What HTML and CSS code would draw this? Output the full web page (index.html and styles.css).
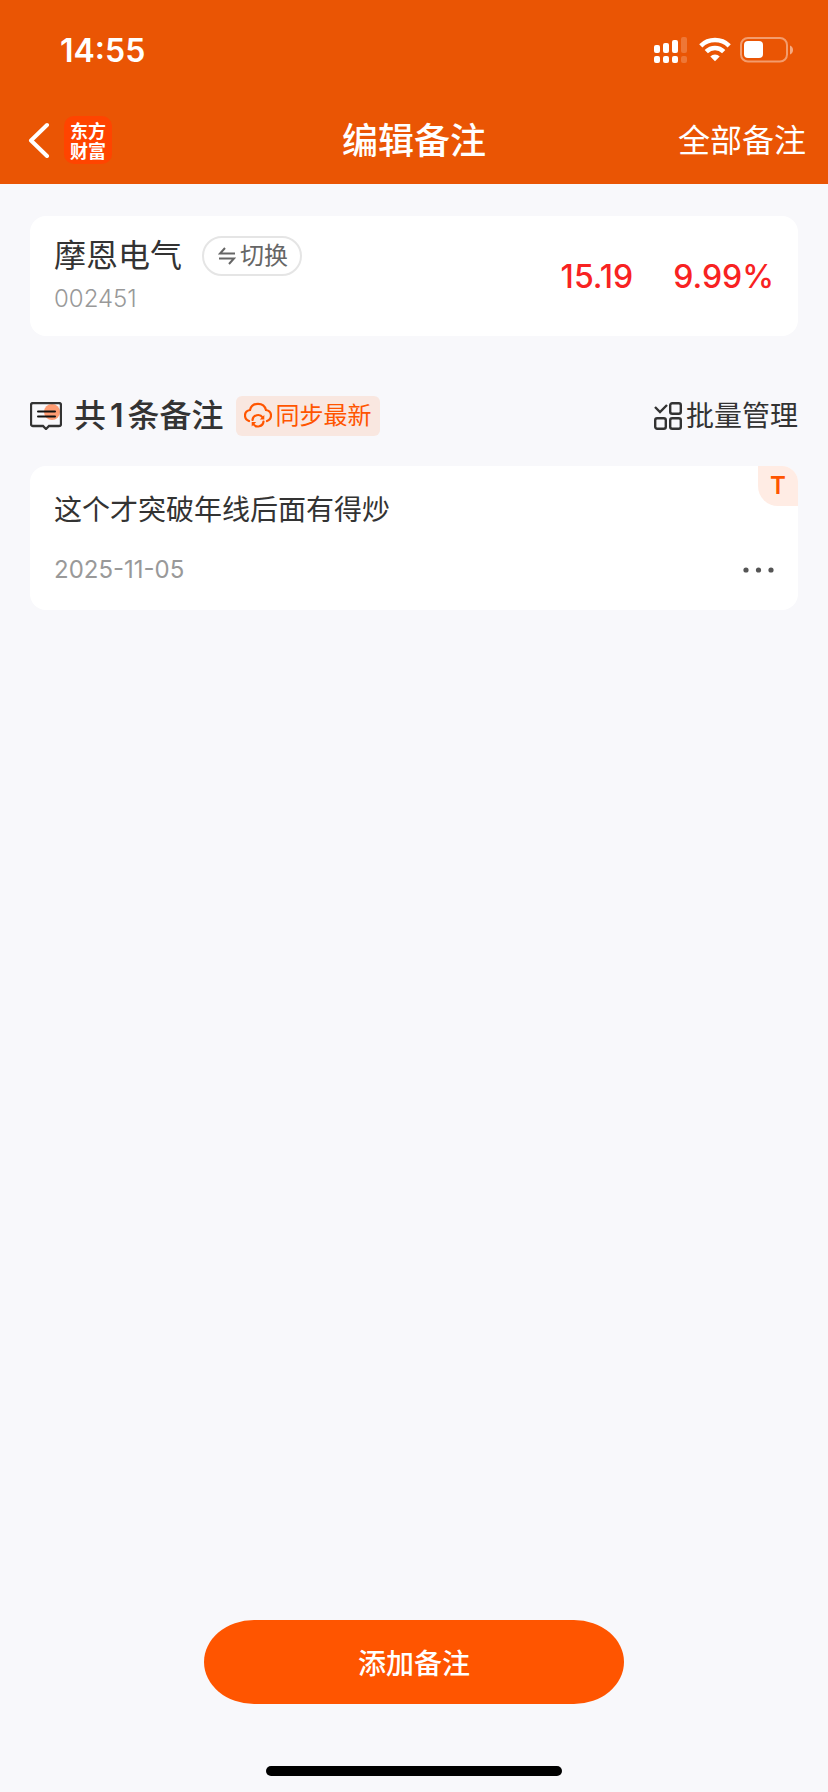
FILE: index.html
```html
<!DOCTYPE html>
<html lang="zh-CN">
<head>
<meta charset="utf-8">
<meta name="viewport" content="width=device-width, initial-scale=1">
<title>编辑备注</title>
<link rel="stylesheet" href="styles.css">
</head>
<body>
<div class="app">
  <header class="header">
    <div class="status">
      <time class="status-time">14:55</time>
      <div class="status-icons">
        <svg class="signal" width="34" height="26" viewBox="0 0 34 26" fill="#fff" aria-hidden="true">
          <rect x="0" y="8" width="6" height="8" rx="2"/><rect x="9" y="6" width="6" height="10" rx="2"/><rect x="18" y="3" width="6" height="13" rx="2"/><rect x="27" y="0" width="6" height="16" rx="2" opacity=".2"/>
          <rect x="0" y="19" width="6" height="7" rx="2"/><rect x="9" y="19" width="6" height="7" rx="2"/><rect x="18" y="19" width="6" height="7" rx="2"/><rect x="27" y="19" width="6" height="7" rx="2" opacity=".2"/>
        </svg>
        <svg class="wifi" width="32" height="26" viewBox="0 0 32 26" aria-hidden="true">
          <g fill="none" stroke="#fff" stroke-width="4.6"><path d="M1.8 8.8a20.4 20.4 0 0 1 28.4 0"/><path d="M7.3 14.6a12.3 12.3 0 0 1 17.4 0"/></g>
          <path d="M11.3 19.4a6.8 6.8 0 0 1 9.4 0L16 24.2z" fill="#fff"/>
        </svg>
        <svg class="battery" width="54" height="26" viewBox="0 0 54 26" aria-hidden="true">
          <rect x="1" y="1" width="46" height="23.600" rx="7" fill="none" stroke="#fff" stroke-width="2" opacity=".42"/>
          <rect x="4" y="4" width="19" height="17" rx="4" fill="#fff"/>
          <path d="M50 8.500c4 1.500 4 7.500 0 9z" fill="#fff" opacity=".5"/>
        </svg>
      </div>
    </div>
    <nav class="nav">
      <div class="nav-left">
        <button class="back" type="button" aria-label="返回">
          <svg width="22" height="36" viewBox="0 0 22 36" fill="none" stroke="#fff" stroke-width="4" stroke-linecap="round" stroke-linejoin="round" aria-hidden="true"><path d="M19 3L3 18.500L19 34"/></svg>
        </button>
        <div class="logo">东方<br>财富</div>
      </div>
      <h1 class="title">编辑备注</h1>
      <a class="all" href="#all">全部备注</a>
    </nav>
  </header>

  <main class="main">
    <section class="card stock">
      <div>
        <div class="stock-row">
          <h2 class="stock-name">摩恩电气</h2>
          <button class="switch" type="button">
            <svg width="18" height="20" viewBox="0 0 18 20" fill="none" stroke="#666" stroke-width="2" aria-hidden="true"><path d="M17 7.500H2L7 2M1 12.500h15L11 18"/></svg>切换
          </button>
        </div>
        <div class="stock-code">002451</div>
      </div>
      <div class="quote"><span>15.19</span><span>9.99%</span></div>
    </section>

    <div class="toolbar">
      <svg class="note-icon" width="32" height="28" viewBox="0 0 32 28" fill="none" aria-hidden="true">
        <circle cx="22" cy="10" r="8" fill="#ff9c73"/>
        <path d="M3 1h26a2 2 0 0 1 2 2v19a2 2 0 0 1-2 2H19l-3 3l-3-3H3a2 2 0 0 1-2-2V3a2 2 0 0 1 2-2z" stroke="#333" stroke-width="2.300"/>
        <path d="M8 9.500h17M8 14.500h17" stroke="#111" stroke-width="2" stroke-linecap="round"/>
      </svg>
      <h2 class="count">共<span class="num">1</span>条备注</h2>
      <button class="sync" type="button">
        <svg width="28" height="28" viewBox="0 0 28 28" fill="none" stroke="#f50" stroke-width="2.200" stroke-linecap="round" aria-hidden="true">
          <path d="M5 19C2.300 18 1 16 1 13.500C1 10.500 3 8.500 6 8C7 4 10 1.800 14 1.800S21 4 22 8C25 8.500 27 10.500 27 13.500C27 16 25.700 18 23 19"/>
          <path d="M8.500 18a5.600 5.600 0 0 1 10.200-2.500M19.500 19.500a5.600 5.600 0 0 1-10.200 2.500"/>
          <path d="M20.300 13v4.500h-4.500zM7.700 24.500V20h4.500z" fill="#f50" stroke="none"/>
        </svg>同步最新
      </button>
      <button class="manage" type="button">
        <svg width="28" height="28" viewBox="0 0 28 28" fill="none" stroke="#333" stroke-width="2.400" aria-hidden="true">
          <path d="M1 5l5 5l7-7"/><rect x="16.200" y="1.200" width="10.600" height="10.600" rx="2"/><rect x="1.200" y="16.200" width="10.600" height="10.600" rx="2"/><rect x="16.200" y="16.200" width="10.600" height="10.600" rx="2"/>
        </svg>批量管理
      </button>
    </div>

    <article class="card note">
      <span class="tag">T</span>
      <p class="note-text">这个才突破年线后面有得炒</p>
      <div class="note-foot">
        <time class="date">2025-11-05</time>
        <button class="more" type="button" aria-label="更多">
          <svg width="32" height="8" viewBox="0 0 32 8" fill="#555" aria-hidden="true"><circle cx="4" cy="4" r="2.600"/><circle cx="16.500" cy="4" r="2.600"/><circle cx="29" cy="4" r="2.600"/></svg>
        </button>
      </div>
    </article>
  </main>

  <footer class="footer">
    <button class="add" type="button">添加备注</button>
    <div class="home"></div>
  </footer>
</div>
</body>
</html>
```
FILE: styles.css
```css
* { box-sizing: border-box; }
body, h1, h2, p { margin: 0; }
body {
  background: #f8f8fb;
  color: #333;
  font-family: Inter, "Noto Sans CJK SC", sans-serif;
  font-size: 28px;
}
h1, h2 { font-weight: 400; }
svg { display: block; flex: none; }
button {
  border: 0;
  padding: 0;
  background: none;
  color: inherit;
  font: inherit;
  white-space: nowrap;
}
.app { min-height: 100vh; display: flex; flex-direction: column; }

.header { background: #ea5504; color: #fff; }
.status {
  height: 96px;
  padding: 4px 34px 0 60px;
  display: flex;
  align-items: center;
  justify-content: space-between;
}
.status-time { font-size: 32px; font-weight: 600; }
.status-icons { display: flex; align-items: center; }
.wifi { margin: 0 9px 0 11px; }
.nav {
  height: 88px;
  padding: 0 22px;
  display: grid;
  grid-template-columns: 1fr auto 1fr;
  align-items: center;
}
.nav-left { display: flex; align-items: center; gap: 14px; padding-left: 6px; }
.logo {
  width: 48px;
  height: 48px;
  padding: 4px 0;
  border-radius: 10px;
  background: #ff4400;
  font-family: "Noto Sans CJK SC", sans-serif;
  font-size: 18px;
  font-weight: 700;
  line-height: 20px;
  text-align: center;
}
.title { padding-top: 2px; font-size: 36px; font-weight: 500; line-height: 48px; }
.all {
  justify-self: end;
  padding-top: 2px;
  color: inherit;
  font-size: 32px;
  line-height: 48px;
  text-decoration: none;
}

.main { flex: 1; padding: 32px 30px 0; }
.card { background: #fff; border-radius: 16px; }
.stock {
  padding: 20px 24px 22px;
  display: flex;
  align-items: center;
  justify-content: space-between;
}
.stock-row { display: flex; align-items: center; gap: 20px; margin-bottom: 8px; }
.stock-name { font-size: 32px; line-height: 40px; }
.switch {
  height: 40px;
  padding: 0 12px 0 14px;
  border: 2px solid #e5e5e5;
  border-radius: 20px;
  display: flex;
  align-items: center;
  gap: 4px;
  color: #666;
  font-size: 24px;
  line-height: 36px;
}
.stock-code { color: #999; font-size: 24px; font-weight: 300; line-height: 30px; }
.quote {
  padding-top: 4px;
  display: flex;
  gap: 40px;
  color: #f82222;
  font-size: 32px;
  font-weight: 500;
  line-height: 40px;
}

.toolbar { display: flex; align-items: center; margin: 60px 0 30px; }
.count { margin: 0 12px; font-size: 32px; font-weight: 500; line-height: 40px; }
.num { margin: 0 4px; font-weight: 600; }
.sync {
  height: 40px;
  padding: 0 8px;
  border-radius: 6px;
  background: #f9e7e0;
  display: flex;
  align-items: center;
  gap: 4px;
  color: #f50;
  font-size: 24px;
  line-height: 36px;
}
.manage { margin-left: auto; display: flex; align-items: center; gap: 4px; line-height: 40px; }

.note { position: relative; padding: 24px; }
.tag {
  position: absolute;
  top: 0;
  right: 0;
  width: 40px;
  height: 40px;
  border-radius: 0 16px 0 20px;
  background: #ffece4;
  color: #f50;
  font-size: 24px;
  font-weight: 600;
  line-height: 40px;
  text-align: center;
}
.note-text { line-height: 40px; }
.note-foot { display: flex; align-items: center; justify-content: space-between; margin-top: 24px; }
.date { color: #999; font-size: 24px; line-height: 32px; }

.footer { display: flex; flex-direction: column; align-items: center; padding-bottom: 16px; }
.add {
  width: 420px;
  max-width: 90%;
  height: 84px;
  border-radius: 50px / 42px;
  background: #f50;
  color: #fff;
  font-weight: 500;
}
.home { width: 296px; height: 10px; margin-top: 62px; border-radius: 5px; background: #000; }
```
